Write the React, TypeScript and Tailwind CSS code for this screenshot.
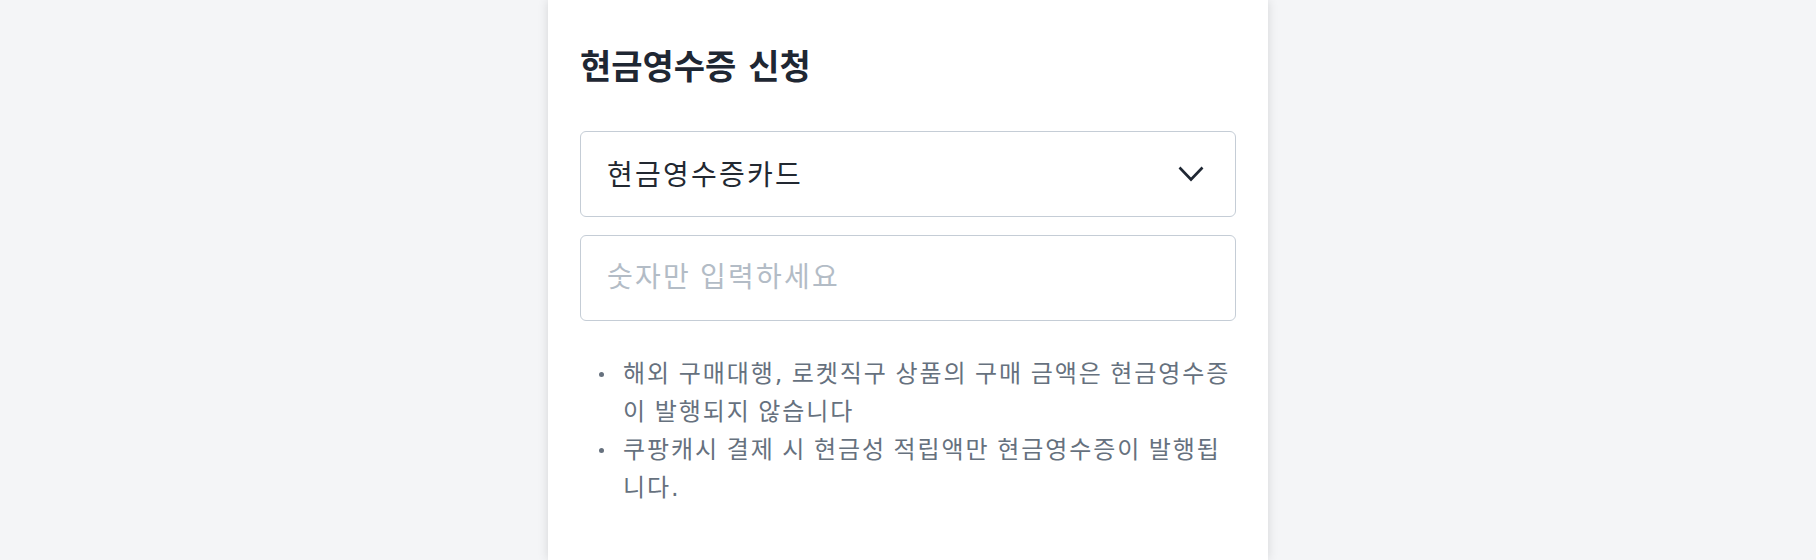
import React from "react";

const font = "font-['DejaVu_Sans','Noto_Sans_CJK_SC',sans-serif]";

export default function App() {
  return (
    <div className={`min-h-[560px] bg-[#f4f5f7] flex justify-center ${font}`}>
      <div className="w-[720px] bg-white shadow-[0_0_10px_rgba(0,0,0,0.13)] px-[32px] pt-[40px]">
        <h2 className="text-[34px] font-bold leading-[54px] text-[#1f2733]">
          현금영수증 신청
        </h2>
        <div className="mt-[37px] h-[86px] border border-[#c5cdd6] rounded-[6px] flex items-center justify-between pl-[26px] pr-[31px]">
          <span className="text-[28px] tracking-[0.08em] [word-spacing:-0.08em] text-[#222831] leading-[40px] pt-[3px]">
            현금영수증카드
          </span>
          <svg width="26" height="16" viewBox="0 0 26 16" fill="none">
            <polyline
              points="1.5,1.5 13,13.5 24.5,1.5"
              stroke="#1f2733"
              strokeWidth="2.6"
              strokeLinejoin="miter"
            />
          </svg>
        </div>
        <div className="mt-[18px] h-[86px] border border-[#c5cdd6] rounded-[6px] flex items-center pl-[26px] pr-[26px]">
          <input
            className={`w-full outline-none text-[28px] tracking-[0.08em] [word-spacing:-0.08em] leading-[40px] text-[#222831] placeholder:text-[#b3bcc6] ${font}`}
            placeholder="숫자만 입력하세요"
          />
        </div>
        <ul className="mt-[34px] text-[24px] tracking-[0.08em] [word-spacing:-0.08em] leading-[38px] text-[#66717e]">
          <li className="flex">
            <span className="w-[43px] shrink-0 h-[38px] flex items-center pl-[19px]">
              <span className="w-[5px] h-[5px] rounded-full bg-[#66717e]" />
            </span>
            <span className="flex-1">
              해외 구매대행, 로켓직구 상품의 구매 금액은 현금영수증이 발행되지 않습니다
            </span>
          </li>
          <li className="flex">
            <span className="w-[43px] shrink-0 h-[38px] flex items-center pl-[19px]">
              <span className="w-[5px] h-[5px] rounded-full bg-[#66717e]" />
            </span>
            <span className="flex-1">
              쿠팡캐시 결제 시 현금성 적립액만 현금영수증이 발행됩니다.
            </span>
          </li>
        </ul>
      </div>
    </div>
  );
}
